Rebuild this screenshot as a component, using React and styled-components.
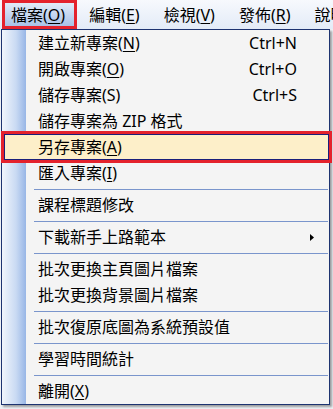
import React from "react";
import styled, { createGlobalStyle } from "styled-components";

const Global = createGlobalStyle`
  html, body { margin: 0; padding: 0; }
  body {
    background: #eef1f5;
    font-family: "Noto Sans", "Noto Sans CJK TC", sans-serif;
    color: #000;
    width: 333px;
    height: 409px;
    overflow: hidden;
  }
`;

const Page = styled.div`
  display: flex;
  flex-direction: column;
  width: 333px;
`;

const MenuBar = styled.div`
  display: flex;
  align-items: stretch;
  height: 29px;
  background: linear-gradient(#f7f9fd, #e3ebf7);
  white-space: nowrap;
  overflow: hidden;
`;

const BarItem = styled.div`
  display: flex;
  align-items: center;
  font-size: 16px;
  line-height: 1;
  padding: ${(p) => (p.$active ? "0 9px 0 6px" : "0 12px")};
  margin-left: ${(p) => (p.$active ? "2px" : "0")};
  border: ${(p) => (p.$active ? "3px solid #e4222c" : "none")};
  background: ${(p) =>
    p.$active ? "linear-gradient(#e2ebf8, #a9c2e7)" : "transparent"};
  flex-shrink: 0;
`;

const U = styled.span`
  text-decoration: underline;
  text-underline-offset: 2px;
`;

const Menu = styled.div`
  display: flex;
  flex-direction: column;
  margin-left: 1px;
  width: 329px;
  box-sizing: border-box;
  border: 1px solid #1d3370;
  background: linear-gradient(
    to right,
    #f1f5fb 0px,
    #c9daf3 14px,
    #98b6e6 24px,
    #f4f4f4 24px
  );
  box-shadow: 2px 2px 2px rgba(0, 0, 0, 0.35);
`;

const Item = styled.div`
  position: relative;
  display: flex;
  align-items: center;
  justify-content: space-between;
  height: 26px;
  box-sizing: border-box;
  font-size: 16px;
  line-height: 1;
  white-space: nowrap;
  padding: ${(p) => (p.$hl ? "0 29px 0 33px" : "0 32px 0 36px")};
  margin: ${(p) => (p.$hl ? "0 0 0 2px" : "0")};
  border: ${(p) => (p.$hl ? "1px solid #1a1f7a" : "none")};
  background: ${(p) => (p.$hl ? "#fdefc9" : "transparent")};
  outline: ${(p) => (p.$hl ? "3px solid #e4222c" : "none")};
  z-index: ${(p) => (p.$hl ? 1 : "auto")};
`;

const Shortcut = styled.span`
  font-size: 16px;
`;

const Arrow = styled.svg`
  width: 4px;
  height: 7px;
  margin-right: -17px;
`;

const Separator = styled.div`
  height: 6px;
  display: flex;
  align-items: center;
  padding: 0 1px 0 32px;
  &::before {
    content: "";
    flex: 1;
    height: 1px;
    background: #7a95cc;
  }
`;

export default function App() {
  return (
    <>
      <Global />
      <Page>
        <MenuBar>
          <BarItem $active>
            檔案(<U>O</U>)
          </BarItem>
          <BarItem>
            編輯(<U>E</U>)
          </BarItem>
          <BarItem>
            檢視(<U>V</U>)
          </BarItem>
          <BarItem>
            發佈(<U>R</U>)
          </BarItem>
          <BarItem>說明(H)</BarItem>
        </MenuBar>
        <Menu>
          <Item>
            <span>
              建立新專案(<U>N</U>)
            </span>
            <Shortcut>Ctrl+N</Shortcut>
          </Item>
          <Item>
            <span>
              開啟專案(<U>O</U>)
            </span>
            <Shortcut>Ctrl+O</Shortcut>
          </Item>
          <Item>
            <span>儲存專案(S)</span>
            <Shortcut>Ctrl+S</Shortcut>
          </Item>
          <Item>
            <span>儲存專案為 ZIP 格式</span>
          </Item>
          <Item $hl>
            <span>
              另存專案(<U>A</U>)
            </span>
          </Item>
          <Item>
            <span>
              匯入專案(<U>I</U>)
            </span>
          </Item>
          <Separator />
          <Item>
            <span>課程標題修改</span>
          </Item>
          <Separator />
          <Item>
            <span>下載新手上路範本</span>
            <Arrow viewBox="0 0 4 7">
              <polygon points="0,0 4,3.5 0,7" fill="#000" />
            </Arrow>
          </Item>
          <Separator />
          <Item>
            <span>批次更換主頁圖片檔案</span>
          </Item>
          <Item>
            <span>批次更換背景圖片檔案</span>
          </Item>
          <Separator />
          <Item>
            <span>批次復原底圖為系統預設值</span>
          </Item>
          <Separator />
          <Item>
            <span>學習時間統計</span>
          </Item>
          <Separator />
          <Item>
            <span>
              離開(<U>X</U>)
            </span>
          </Item>
        </Menu>
      </Page>
    </>
  );
}
